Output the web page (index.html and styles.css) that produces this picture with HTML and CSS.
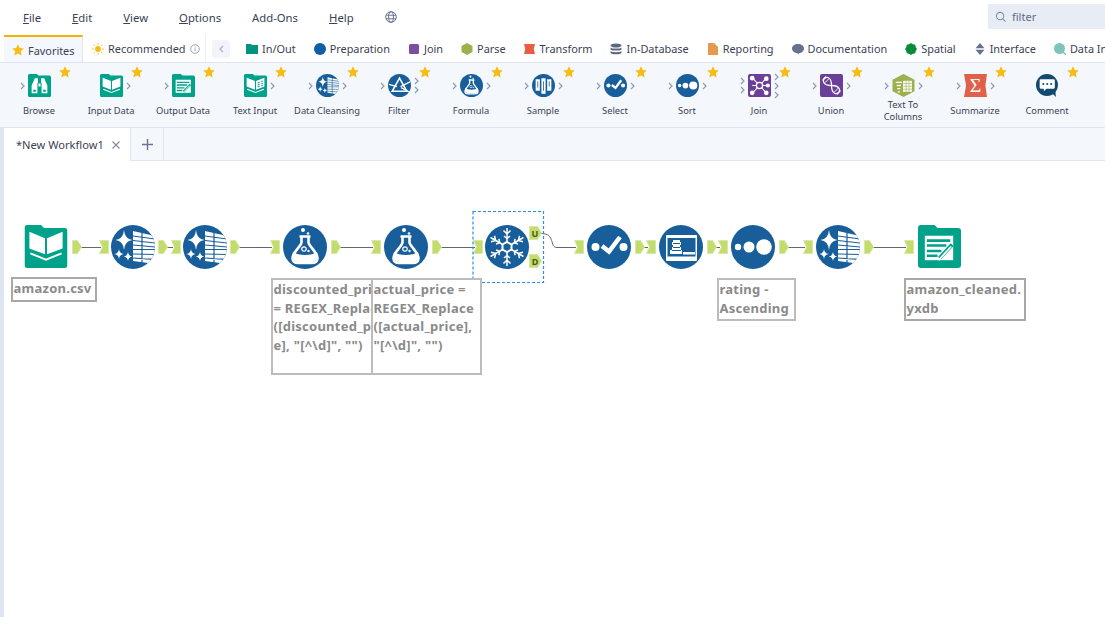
FILE: index.html
```html
<!DOCTYPE html>
<html lang="en">
<head>
    <meta charset="UTF-8">
    <meta name="viewport" content="width=device-width, initial-scale=1.0">
    <link rel="stylesheet" href="styles.css">
    <title>New Workflow1</title>
</head>
<body>

<svg class="defs" width="0" height="0">
    <defs>
        <clipPath id="circ"><circle cx="22" cy="22" r="22"/></clipPath>
        <symbol id="star" viewBox="0 0 12 12"><path fill="#f6bd16" d="M6 .3l1.800 3.700 4 .5-3 2.800.8 4.100L6 9.400l-3.600 2 .8-4.100-3-2.800 4-.5z"/></symbol>
        <symbol id="chev" viewBox="0 0 5 8"><path fill="none" stroke="#8e9abb" stroke-width="1.200" d="M1 1l3 3-3 3"/></symbol>
        <symbol id="folder" viewBox="0 0 44 44"><path fill="#00a28a" d="M3 0h14l3 3h21a3 3 0 0 1 3 3v35a3 3 0 0 1-3 3H3a3 3 0 0 1-3-3V3a3 3 0 0 1 3-3z"/></symbol>

        <symbol id="t-input" viewBox="0 0 44 44">
            <use href="#folder" width="44" height="44"/>
            <path fill="#fff" d="M5 7l16 6.500V30L5 24zM23 13.500L39 7v17l-16 6z"/>
            <path fill="none" stroke="#fff" stroke-width="2" d="M6 29l16 6.500L38 29"/>
        </symbol>
        <symbol id="t-output" viewBox="0 0 44 44">
            <use href="#folder" width="44" height="44"/>
            <rect fill="#fff" x="7" y="11" width="29" height="25"/>
            <path stroke="#00a28a" stroke-width="2.600" d="M9 16h24M9 21h20M9 26.500h15M9 31.500h11"/>
            <path stroke="#00a28a" stroke-width="4" d="M22 34L35 20"/>
            <path stroke="#fff" stroke-width="1.800" d="M21 36l13-14"/>
        </symbol>
        <symbol id="t-browse" viewBox="0 0 44 44">
            <use href="#folder" width="44" height="44"/>
            <path fill="#fff" d="M13 8h6v9h-1v20H7V22zM25 8h6l6 14v15H26V17h-1zM20 18h4v6h-4z"/>
            <path fill="#00a28a" d="M10 30h5v4h-5zM29 30h5v4h-5z"/>
        </symbol>
        <symbol id="t-text" viewBox="0 0 44 44">
            <use href="#folder" width="44" height="44"/>
            <path fill="#fff" d="M5 7l16 6.500V30L5 24zM23 13.500L39 7v17l-16 6z"/>
            <path stroke="#00a28a" stroke-width="2" d="M26 17l4-1.400M26 21l4-1.400M26 25l4-1.400M33 14.500l3-1M33 18.500l3-1M33 22.500l3-1"/>
            <path fill="none" stroke="#fff" stroke-width="2" d="M6 29l16 6.500L38 29"/>
        </symbol>
        <symbol id="t-clean" viewBox="0 0 44 44">
            <circle cx="22" cy="22" r="22" fill="#175e9a"/>
            <g clip-path="url(#circ)">
                <path fill="#fff" d="M22 6l22 5v28l-22-3z"/>
                <path stroke="#175e9a" stroke-width="1.200" d="M22 11l22 3M22 15.500l22 2.500M22 20l22 2M22 24.500h22M22 29l22 .5M22 33l22 1.500M31 7v32"/>
            </g>
            <path fill="#fff" d="M13 5q.7 9 8.500 10-7.800 1-8.500 10-.7-9-8.500-10 7.800-1 8.500-10zM8 24q.4 4.200 4.500 5-4.100.8-4.500 5-.4-4.200-4.500-5 4.100-.8 4.500-5zM17 27q.4 4 4.200 4.500-3.800.5-4.200 4.500-.4-4-4.200-4.500 3.800-.5 4.200-4.500z"/>
        </symbol>
        <symbol id="t-formula" viewBox="0 0 44 44">
            <circle cx="22" cy="22" r="22" fill="#175e9a"/>
            <circle cx="20" cy="5" r="2" fill="#fff"/><circle cx="25" cy="8.500" r="1.300" fill="#fff"/>
            <path fill="none" stroke="#fff" stroke-width="2.600" d="M16.500 11.500h11M18.500 12v5.500c0 3-9 10-9 15.500 0 4 3 5 6 5h13c3 0 6-1 6-5 0-5.500-9-12.500-9-15.500V12"/>
            <path fill="#fff" d="M10 27c5 4 19 4 24 0 1 3 1 10-6 10H16c-7 0-7-7-6-10z"/>
            <circle cx="21" cy="24" r="2.200" fill="none" stroke="#fff" stroke-width="1.200"/><circle cx="25.500" cy="26" r="1.200" fill="#fff"/>
        </symbol>
        <symbol id="t-filter" viewBox="0 0 44 44">
            <circle cx="22" cy="22" r="22" fill="#175e9a"/>
            <path fill="none" stroke="#fff" stroke-width="3" d="M22 8L8 33h28z"/>
            <path stroke="#fff" stroke-width="2.500" d="M2 20l15 4M24 24l18-9M25 26l17 9"/>
        </symbol>
        <symbol id="t-sample" viewBox="0 0 44 44">
            <circle cx="22" cy="22" r="22" fill="#175e9a"/>
            <path fill="#fff" d="M7 10h8v22H7zM18 8h8v30h-8zM29 10h8v22h-8z"/>
            <path stroke="#175e9a" stroke-width="1.500" d="M11 14v12M22 14v18M33 14v10"/>
        </symbol>
        <symbol id="t-select" viewBox="0 0 44 44">
            <circle cx="22" cy="22" r="22" fill="#175e9a"/>
            <circle cx="8.500" cy="22" r="4" fill="#fff"/><circle cx="36.500" cy="22" r="4" fill="#fff"/>
            <path fill="none" stroke="#fff" stroke-width="4.500" d="M15 21l7 5.500L33 12"/>
        </symbol>
        <symbol id="t-sort" viewBox="0 0 44 44">
            <circle cx="22" cy="22" r="22" fill="#175e9a"/>
            <circle cx="7" cy="22" r="3.200" fill="#fff"/><circle cx="18" cy="22" r="5.500" fill="#fff"/><circle cx="33" cy="22" r="7.800" fill="#fff"/>
        </symbol>
        <symbol id="t-unique" viewBox="0 0 44 44">
            <circle cx="22" cy="22" r="22" fill="#175e9a"/>
            <g fill="none" stroke="#fff" stroke-width="1.500">
                <g id="arm"><path d="M22 17V3M18.500 5.500l3.500 3.500 3.500-3.500M19 11l3 2.500 3-2.500"/></g>
                <use href="#arm" transform="rotate(60 22 22)"/><use href="#arm" transform="rotate(120 22 22)"/>
                <use href="#arm" transform="rotate(180 22 22)"/><use href="#arm" transform="rotate(240 22 22)"/><use href="#arm" transform="rotate(300 22 22)"/>
                <path stroke-width="2" d="M22 17l4.500 2.500v5L22 27l-4.500-2.500v-5z"/>
            </g>
        </symbol>
        <symbol id="t-window" viewBox="0 0 44 44">
            <circle cx="22" cy="22" r="22" fill="#175e9a"/>
            <rect x="7" y="10" width="31" height="26" rx="1" fill="#fff"/>
            <rect x="8.500" y="13" width="28" height="18.500" fill="#175e9a"/>
            <path fill="#fff" d="M14 15h7v2h1v3h-1v2h1v3h1v4H11v-4h2v-3h1v-2h-1v-3h1zM24 27h12v2.500H24z"/>
            <path stroke="#175e9a" d="M14 18.500h7M14 22.500h7M13 25.500h9"/>
        </symbol>
        <symbol id="t-join" viewBox="0 0 44 44">
            <rect width="44" height="44" rx="4" fill="#6b3f98"/>
            <g stroke="#fff" stroke-width="2"><path d="M22 22L9 8M22 22L35 8M22 22L9 36M22 22L35 36M22 22H39M22 22H8"/></g>
            <circle cx="22" cy="22" r="6" fill="#6b3f98" stroke="#fff" stroke-width="2.500"/>
            <g fill="#fff"><circle cx="8" cy="8" r="4.500"/><circle cx="35" cy="9" r="4.500"/><circle cx="8" cy="36" r="4.500"/><circle cx="35" cy="36" r="4.500"/><circle cx="38" cy="22" r="4"/></g>
        </symbol>
        <symbol id="t-union" viewBox="0 0 44 44">
            <rect width="44" height="44" rx="4" fill="#6b3f98"/>
            <g fill="none" stroke="#fff" stroke-width="2.400">
                <path d="M5 12C12 2 22 6 22 22s10 20 17 10"/>
                <path d="M12 5C2 12 6 22 22 22s20 10 10 17"/>
                <path stroke-width="1.800" d="M9 17l8-8M27 35l8-8"/>
            </g>
        </symbol>
        <symbol id="t-ttc" viewBox="0 0 44 44">
            <path fill="#9cb04c" d="M22 0l21 11v22L22 44 1 33V11z"/>
            <path stroke="#fff" stroke-width="2.400" d="M7 16h12M9 22h8M10 28h6M11 34h4"/>
            <rect x="21" y="13" width="17" height="21" fill="#fff"/>
            <path stroke="#9cb04c" stroke-width="1.200" d="M21 18h17M21 23.500h17M21 29h17M27 13v21M32.500 13v21"/>
        </symbol>
        <symbol id="t-sum" viewBox="0 0 44 44">
            <path fill="#e0614a" d="M0 0h44l-3 22 3 22H0l4-22z"/>
            <text x="22" y="35" text-anchor="middle" font-family="Liberation Serif, serif" font-size="38" fill="#fff">Σ</text>
        </symbol>
        <symbol id="t-comment" viewBox="0 0 44 44">
            <circle cx="21" cy="21" r="21" fill="#12496e"/>
            <path fill="#12496e" d="M30 36l8 8-1-14z"/>
            <path fill="#fff" d="M9 10h25a2 2 0 0 1 2 2v14a2 2 0 0 1-2 2H20l-5 5v-5H9a2 2 0 0 1-2-2V12a2 2 0 0 1 2-2z"/>
            <g fill="#12496e"><circle cx="14" cy="19" r="2"/><circle cx="21.500" cy="19" r="2"/><circle cx="29" cy="19" r="2"/></g>
        </symbol>
        <symbol id="a-out" viewBox="0 0 10 14"><path fill="#c3dc6e" stroke="#d7e8a0" d="M.5.500h5l4 6.500-4 6.500h-5z"/></symbol>
        <symbol id="a-in" viewBox="0 0 10 14"><path fill="#c3dc6e" stroke="#d7e8a0" d="M.5.500h9v13h-9l3-6.500z"/></symbol>
    </defs>
</svg>

<div class="menu-bar">
    <nav class="menu">
        <span><u>F</u>ile</span>
        <span><u>E</u>dit</span>
        <span><u>V</u>iew</span>
        <span><u>O</u>ptions</span>
        <span>Add-Ons</span>
        <span><u>H</u>elp</span>
        <svg class="globe" viewBox="0 0 12 12"><g fill="none" stroke="#6c7693"><circle cx="6" cy="6" r="5.300"/><ellipse cx="6" cy="6" rx="2.400" ry="5.300"/><path d="M1 4.200h10M1 7.800h10"/></g></svg>
    </nav>
    <div class="search">
        <svg class="search-icon" viewBox="0 0 12 12"><g fill="none" stroke="#7a88ab" stroke-width="1.100"><circle cx="5.500" cy="5.500" r="4"/><path d="M8.500 8.500l3 3"/></g></svg>
        <span>filter</span>
    </div>
</div>

<div class="cat-bar">
    <div class="cat-tab active">
        <svg class="cat-icon"><use href="#star"/></svg>Favorites
    </div>
    <div class="cat-tab recommended">
        <svg class="cat-icon" viewBox="0 0 14 14"><circle cx="7" cy="7" r="3.400" fill="#f6bd16"/><path stroke="#f6bd16" stroke-width="1.100" d="M7 0v2.200M7 11.800V14M0 7h2.200M11.800 7H14M2 2l1.600 1.600M10.400 10.400L12 12M2 12l1.600-1.600M10.400 3.600L12 2"/></svg>
        Recommended
        <svg class="info" viewBox="0 0 10 10"><circle cx="5" cy="5" r="4.300" fill="none" stroke="#98a3bf"/><path stroke="#98a3bf" d="M5 4.300v3M5 2.400v1"/></svg>
    </div>
    <div class="back"><svg viewBox="0 0 5 8"><path fill="none" stroke="#a8b1c8" stroke-width="1.200" d="M4 1L1 4l3 3"/></svg></div>
    <div class="cats">
        <div class="cat"><svg class="cat-icon" viewBox="0 0 12 12"><path fill="#00937f" d="M0 1h5l1 1h6v9H0z"/></svg>In/Out</div>
        <div class="cat"><svg class="cat-icon" viewBox="0 0 12 12"><circle cx="6" cy="6" r="6" fill="#0f5fa6"/></svg>Preparation</div>
        <div class="cat"><svg class="cat-icon" viewBox="0 0 12 12"><rect x="1" y="1" width="10" height="10" rx="1.500" fill="#7b4ea3"/></svg>Join</div>
        <div class="cat"><svg class="cat-icon" viewBox="0 0 12 12"><path fill="#9cb04c" d="M6 0l5.500 3v6L6 12 .5 9V3z"/></svg>Parse</div>
        <div class="cat"><svg class="cat-icon" viewBox="0 0 12 12"><path fill="#e85d45" d="M0 1h11l-1.200 5L11 11H0l1.200-5z"/></svg>Transform</div>
        <div class="cat"><svg class="cat-icon" viewBox="0 0 12 12"><g fill="#5c6880"><ellipse cx="6" cy="2.500" rx="5.500" ry="2"/><path d="M.5 4.400c1 1.600 10 1.600 11 0v2c-1 1.600-10 1.600-11 0zM.5 8c1 1.600 10 1.600 11 0v1.800c-1 2-10 2-11 0z"/></g></svg>In-Database</div>
        <div class="cat"><svg class="cat-icon" viewBox="0 0 12 12"><path fill="#e39a4e" d="M1 0h6l4 4v8H1z"/></svg>Reporting</div>
        <div class="cat"><svg class="cat-icon" viewBox="0 0 12 12"><path fill="#67718f" d="M6 1c3.500 0 6 1.800 6 4.500S9.500 10 7.500 10L6 11.500 5.500 10C2.500 10 0 8 0 5.500S2.500 1 6 1z"/></svg>Documentation</div>
        <div class="cat"><svg class="cat-icon" viewBox="0 0 12 12"><path fill="#0a8a3a" d="M6 0l2 1.300 2.300.4.400 2.300L12 6l-1.300 2-.4 2.300-2.300.4L6 12l-2-1.300-2.300-.4L1.300 8 0 6l1.300-2 .4-2.300L4 1.300z"/></svg>Spatial</div>
        <div class="cat"><svg class="cat-icon" viewBox="0 0 12 12"><path fill="#67718f" d="M6 0l4.500 5.200h-9zM1.500 6.800h9L6 12z"/></svg>Interface</div>
        <div class="cat"><svg class="cat-icon" viewBox="0 0 12 12"><circle cx="5.500" cy="5.500" r="5.500" fill="#7fc4b8"/><path stroke="#7fc4b8" stroke-width="1.500" d="M9 9l3 3"/></svg>Data In</div>
    </div>
</div>

<div class="tool-bar">
    <div class="tool"><svg class="fav"><use href="#star"/></svg><div class="tool-row"><span class="ports"><svg><use href="#chev"/></svg></span><svg class="tool-icon"><use href="#t-browse"/></svg><span class="ports"></span></div><div class="tool-name">Browse</div></div>
    <div class="tool"><svg class="fav"><use href="#star"/></svg><div class="tool-row"><span class="ports"></span><svg class="tool-icon"><use href="#t-input"/></svg><span class="ports"><svg><use href="#chev"/></svg></span></div><div class="tool-name">Input Data</div></div>
    <div class="tool"><svg class="fav"><use href="#star"/></svg><div class="tool-row"><span class="ports"><svg><use href="#chev"/></svg></span><svg class="tool-icon"><use href="#t-output"/></svg><span class="ports"></span></div><div class="tool-name">Output Data</div></div>
    <div class="tool"><svg class="fav"><use href="#star"/></svg><div class="tool-row"><span class="ports"></span><svg class="tool-icon"><use href="#t-text"/></svg><span class="ports"><svg><use href="#chev"/></svg></span></div><div class="tool-name">Text Input</div></div>
    <div class="tool"><svg class="fav"><use href="#star"/></svg><div class="tool-row"><span class="ports"><svg><use href="#chev"/></svg></span><svg class="tool-icon"><use href="#t-clean"/></svg><span class="ports"><svg><use href="#chev"/></svg></span></div><div class="tool-name">Data Cleansing</div></div>
    <div class="tool"><svg class="fav"><use href="#star"/></svg><div class="tool-row"><span class="ports"><svg><use href="#chev"/></svg></span><svg class="tool-icon"><use href="#t-filter"/></svg><span class="ports"><svg><use href="#chev"/></svg><svg><use href="#chev"/></svg></span></div><div class="tool-name">Filter</div></div>
    <div class="tool"><svg class="fav"><use href="#star"/></svg><div class="tool-row"><span class="ports"><svg><use href="#chev"/></svg></span><svg class="tool-icon"><use href="#t-formula"/></svg><span class="ports"><svg><use href="#chev"/></svg></span></div><div class="tool-name">Formula</div></div>
    <div class="tool"><svg class="fav"><use href="#star"/></svg><div class="tool-row"><span class="ports"><svg><use href="#chev"/></svg></span><svg class="tool-icon"><use href="#t-sample"/></svg><span class="ports"><svg><use href="#chev"/></svg></span></div><div class="tool-name">Sample</div></div>
    <div class="tool"><svg class="fav"><use href="#star"/></svg><div class="tool-row"><span class="ports"><svg><use href="#chev"/></svg></span><svg class="tool-icon"><use href="#t-select"/></svg><span class="ports"><svg><use href="#chev"/></svg></span></div><div class="tool-name">Select</div></div>
    <div class="tool"><svg class="fav"><use href="#star"/></svg><div class="tool-row"><span class="ports"><svg><use href="#chev"/></svg></span><svg class="tool-icon"><use href="#t-sort"/></svg><span class="ports"><svg><use href="#chev"/></svg></span></div><div class="tool-name">Sort</div></div>
    <div class="tool"><svg class="fav"><use href="#star"/></svg><div class="tool-row"><span class="ports"><svg><use href="#chev"/></svg><svg><use href="#chev"/></svg></span><svg class="tool-icon"><use href="#t-join"/></svg><span class="ports"><svg><use href="#chev"/></svg><svg><use href="#chev"/></svg><svg><use href="#chev"/></svg></span></div><div class="tool-name">Join</div></div>
    <div class="tool"><svg class="fav"><use href="#star"/></svg><div class="tool-row"><span class="ports"><svg><use href="#chev"/></svg></span><svg class="tool-icon"><use href="#t-union"/></svg><span class="ports"><svg><use href="#chev"/></svg></span></div><div class="tool-name">Union</div></div>
    <div class="tool"><svg class="fav"><use href="#star"/></svg><div class="tool-row"><span class="ports"><svg><use href="#chev"/></svg></span><svg class="tool-icon"><use href="#t-ttc"/></svg><span class="ports"><svg><use href="#chev"/></svg></span></div><div class="tool-name">Text To<br>Columns</div></div>
    <div class="tool"><svg class="fav"><use href="#star"/></svg><div class="tool-row"><span class="ports"><svg><use href="#chev"/></svg></span><svg class="tool-icon"><use href="#t-sum"/></svg><span class="ports"><svg><use href="#chev"/></svg></span></div><div class="tool-name">Summarize</div></div>
    <div class="tool"><svg class="fav"><use href="#star"/></svg><div class="tool-row"><span class="ports"></span><svg class="tool-icon"><use href="#t-comment"/></svg><span class="ports"></span></div><div class="tool-name">Comment</div></div>
</div>

<div class="doc-bar">
    <div class="doc-tab">*New Workflow1<svg class="close" viewBox="0 0 8 8"><path stroke="#7f8aa6" stroke-width="1.100" d="M.5.500l7 7M7.500.500l-7 7"/></svg></div>
    <div class="doc-add"><svg viewBox="0 0 11 11"><path stroke="#6c7693" stroke-width="1.400" d="M5.500 0v11M0 5.500h11"/></svg></div>
</div>

<div class="canvas">
    <!-- viewBox keeps page coordinates for the flow -->
    <svg class="flow" width="1101" height="456" viewBox="4 161 1101 456">
        <g fill="none" stroke="#666" stroke-width="1">
            <path d="M81 247.500h20M166 247.500h7M238 247.500h34M340 247.500h33M440 247.500h35M541 233.500c15 0 8 14 16 14h19M643 247.500h5M715 247.500h5M787 247.500h18M872 247.500h34"/>
        </g>

        <use href="#t-input" x="24.500" y="225" width="43" height="43"/>
        <use href="#t-clean" x="111" y="225" width="44" height="44"/>
        <use href="#t-clean" x="183" y="225" width="44" height="44"/>
        <use href="#t-formula" x="283" y="225" width="44" height="44"/>
        <use href="#t-formula" x="384" y="225" width="44" height="44"/>
        <use href="#t-unique" x="485" y="225" width="44" height="44"/>
        <use href="#t-select" x="587" y="225" width="44" height="44"/>
        <use href="#t-window" x="659" y="225" width="44" height="44"/>
        <use href="#t-sort" x="731" y="225" width="44" height="44"/>
        <use href="#t-clean" x="816" y="225" width="44" height="44"/>
        <use href="#t-output" x="918" y="225" width="43" height="43"/>

        <use href="#a-out" x="72" y="240" width="10" height="14"/>
        <use href="#a-in" x="99" y="240" width="10" height="14"/>
        <use href="#a-out" x="158" y="240" width="10" height="14"/>
        <use href="#a-in" x="171" y="240" width="10" height="14"/>
        <use href="#a-out" x="230" y="240" width="10" height="14"/>
        <use href="#a-in" x="270" y="240" width="10" height="14"/>
        <use href="#a-out" x="331" y="240" width="10" height="14"/>
        <use href="#a-in" x="371" y="240" width="10" height="14"/>
        <use href="#a-out" x="432" y="240" width="10" height="14"/>
        <use href="#a-in" x="473" y="240" width="10" height="14"/>
        <use href="#a-in" x="574" y="240" width="10" height="14"/>
        <use href="#a-out" x="635" y="240" width="10" height="14"/>
        <use href="#a-in" x="646" y="240" width="10" height="14"/>
        <use href="#a-out" x="707" y="240" width="10" height="14"/>
        <use href="#a-in" x="718" y="240" width="10" height="14"/>
        <use href="#a-out" x="779" y="240" width="10" height="14"/>
        <use href="#a-in" x="803" y="240" width="10" height="14"/>
        <use href="#a-out" x="864" y="240" width="10" height="14"/>
        <use href="#a-in" x="904" y="240" width="10" height="14"/>

        <path fill="#c3dc6e" stroke="#d7e8a0" d="M529.500 226.500h8l4 6.500-4 6.500h-8zM529.500 254.500h8l4 6.500-4 6.500h-8z"/>
        <text class="anchor-letter" x="535" y="236.500">U</text>
        <text class="anchor-letter" x="535" y="264.500">D</text>

        <rect x="473" y="211.500" width="70.500" height="71" fill="none" stroke="#2c8fe6" stroke-width="1.200" stroke-dasharray="3 2"/>
    </svg>

    <div class="note note-csv">amazon.csv</div>
    <div class="note note-disc">discounted_price<br>= REGEX_Replace<br>([discounted_pric<br>e], "[^\d]", "")</div>
    <div class="note note-actual">actual_price =<br>REGEX_Replace<br>([actual_price],<br>"[^\d]", "")</div>
    <div class="note note-sort">rating -<br>Ascending</div>
    <div class="note note-out">amazon_cleaned.<br>yxdb</div>
</div>

</body>
</html>
```

FILE: styles.css
```css
html, body {
    margin: 0;
    padding: 0;
    height: 617px;
    overflow: hidden;
}

body {
    font-family: 'Noto Sans', 'Open Sans', sans-serif;
    background-color: #fff;
    color: #3a3f55;
    display: flex;
    flex-direction: column;
}

.defs {
    position: absolute;
}

/* menu */
.menu-bar {
    height: 35px;
    flex: none;
    display: flex;
    justify-content: space-between;
}

.menu {
    display: flex;
    align-items: center;
    gap: 31px;
    padding-left: 23px;
    font-size: 11.3px;
    height: 35px;
}

.globe {
    width: 12px;
    height: 12px;
    margin-top: -1px;
}

.search {
    width: 117px;
    height: 25px;
    margin-top: 4px;
    background-color: #e8ecf5;
    display: flex;
    align-items: center;
    gap: 6px;
    padding: 0 0 1px 7px;
    box-sizing: border-box;
    font-size: 11px;
    color: #5f6a88;
}

.search-icon {
    width: 11px;
    height: 11px;
}

/* category row */
.cat-bar {
    height: 28px;
    flex: none;
    display: flex;
    align-items: stretch;
    font-size: 10.9px;
    padding-left: 4px;
    overflow: hidden;
    white-space: nowrap;
    border-bottom: 1px solid #dfe5f0;
    box-sizing: border-box;
}

.cat-icon {
    width: 12px;
    height: 12px;
    flex: none;
}

.cat-tab {
    flex: none;
    display: flex;
    align-items: center;
    gap: 4px;
}

.cat-tab.active {
    width: 79px;
    box-sizing: border-box;
    padding-left: 8px;
    background-color: #f4f7fc;
    border-top: 2px solid #f0b400;
    border-right: 1px solid #dfe5f0;
    height: 28px;
}

.recommended {
    padding-left: 9px;
    width: 123px;
    box-sizing: border-box;
    border-right: 1px solid #eef1f7;
}

.info {
    width: 10px;
    height: 10px;
}

.back {
    flex: none;
    width: 18px;
    height: 18px;
    margin: 5px 0 0 6px;
    background-color: #f2f4f9;
    border-radius: 3px;
    display: flex;
    align-items: center;
    justify-content: center;
}

.back svg {
    width: 5px;
    height: 8px;
}

.cats {
    display: flex;
    gap: 18px;
    margin-left: 16px;
}

.cat {
    flex: none;
    display: flex;
    align-items: center;
    gap: 4px;
}

/* tool palette */
.tool-bar {
    height: 65px;
    flex: none;
    display: flex;
    padding-left: 3px;
    background-color: #f4f7fc;
    border-bottom: 1px solid #dfe5f0;
    box-sizing: border-box;
}

.tool {
    position: relative;
    width: 72px;
    flex: none;
    padding-top: 11px;
    box-sizing: border-box;
}

.fav {
    position: absolute;
    top: 3px;
    right: 4px;
    width: 12px;
    height: 12px;
}

.tool-row {
    display: flex;
    justify-content: center;
    align-items: center;
    gap: 3px;
    height: 23px;
}

.tool-icon {
    width: 23px;
    height: 23px;
}

.ports {
    width: 5px;
    display: flex;
    flex-direction: column;
    gap: 1px;
}

.ports svg {
    width: 5px;
    height: 8px;
}

.tool-name {
    height: 24px;
    margin-top: 2px;
    display: flex;
    align-items: center;
    justify-content: center;
    text-align: center;
    font-size: 9.3px;
    line-height: 12px;
    white-space: nowrap;
}

/* document tabs */
.doc-bar {
    height: 33px;
    flex: none;
    display: flex;
    padding-left: 4px;
    background-color: #f4f7fc;
    border-bottom: 1px solid #dfe5f0;
    box-sizing: border-box;
}

.doc-tab {
    width: 127px;
    height: 33px;
    box-sizing: border-box;
    background-color: #fff;
    border-right: 1px solid #dfe5f0;
    display: flex;
    align-items: center;
    padding-left: 12px;
    font-size: 11.1px;
}

.close {
    width: 8px;
    height: 8px;
    margin-left: 8px;
}

.doc-add {
    width: 33px;
    box-sizing: border-box;
    border-right: 1px solid #dfe5f0;
    display: flex;
    align-items: center;
    justify-content: center;
}

.doc-add svg {
    width: 11px;
    height: 11px;
}

/* workflow canvas */
.canvas {
    position: relative;
    flex: 1;
    margin-left: 4px;
    background-color: #fff;
}

body::before {
    content: "";
    position: absolute;
    left: 0;
    top: 128px;
    bottom: 0;
    width: 4px;
    background-color: #dfe5f2;
}

.flow {
    position: absolute;
    left: 0;
    top: 0;
}

.anchor-letter {
    font-family: 'Noto Sans', sans-serif;
    font-size: 9px;
    font-weight: 700;
    fill: #4a5a20;
    text-anchor: middle;
}

.note {
    position: absolute;
    box-sizing: border-box;
    background-color: #fff;
    border: 2px solid #bcbcbc;
    font-size: 13px;
    font-weight: 700;
    letter-spacing: .25px;
    line-height: 18.7px;
    color: #8a8a8a;
    padding-left: .5px;
    white-space: nowrap;
    overflow: hidden;
}

.note-csv {
    left: 7px;
    top: 116px;
    width: 86px;
    height: 25px;
    border-color: #a8a8a8;
}

.note-disc {
    left: 267px;
    top: 117px;
    width: 124px;
    height: 97px;
}

.note-actual {
    left: 367px;
    top: 117px;
    width: 111px;
    height: 97px;
}

.note-sort {
    left: 713px;
    top: 117px;
    width: 79px;
    height: 43px;
}

.note-out {
    left: 900px;
    top: 117px;
    width: 122px;
    height: 43px;
    border-color: #a8a8a8;
}
```
